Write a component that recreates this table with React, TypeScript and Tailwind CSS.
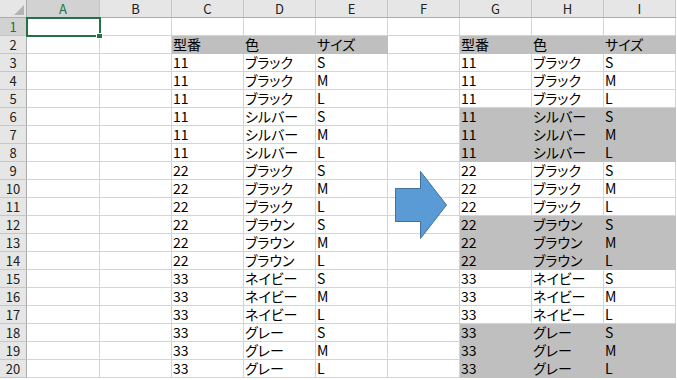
import React from 'react';

const COLS = ['A', 'B', 'C', 'D', 'E', 'F', 'G', 'H', 'I'];

// product rows: [型番, 色, サイズ]
const items: [string, string, string][] = [];
const groups: [string, string][] = [
  ['11', 'ブラック'],
  ['11', 'シルバー'],
  ['22', 'ブラック'],
  ['22', 'ブラウン'],
  ['33', 'ネイビー'],
  ['33', 'グレー'],
];
groups.forEach(([no, color]) => {
  ['S', 'M', 'L'].forEach((s) => items.push([no, color, s]));
});

const GRAY = 'bg-[#bfbfbf] border-[#bfbfbf]';
const PLAIN = 'bg-white border-[#d4d4d4]';

function cellFor(row: number, col: number): { text: string; gray: boolean } {
  // row is the sheet row number (1-based), col is index into COLS
  if (row === 2) {
    const head = ['型番', '色', 'サイズ'];
    if (col >= 2 && col <= 4) return { text: head[col - 2], gray: true };
    if (col >= 6 && col <= 8) return { text: head[col - 6], gray: true };
  }
  if (row >= 3) {
    const item = items[row - 3];
    const groupIdx = Math.floor((row - 3) / 3);
    if (col >= 2 && col <= 4) return { text: item[col - 2], gray: false };
    if (col >= 6 && col <= 8) return { text: item[col - 6], gray: groupIdx % 2 === 1 };
  }
  return { text: '', gray: false };
}

function Arrow() {
  return (
    <svg className="absolute left-[393px] top-[169px]" width="56" height="72" viewBox="393 169 56 72">
      <polygon
        points="395.5,188.5 420.5,188.5 420.5,171.5 446.5,205 420.5,238.5 420.5,221.5 395.5,221.5"
        fill="#5b9bd5"
        stroke="#41719c"
        strokeWidth="1"
      />
    </svg>
  );
}

export default function App() {
  const rows = Array.from({ length: 20 }, (_, i) => i + 1);

  return (
    <div className="relative w-[677px] h-[380px] overflow-hidden bg-white text-black font-['Noto_Sans_CJK_JP','Noto_Sans',sans-serif] [font-feature-settings:'palt'] text-[14px] leading-[17px]">
      <div className="grid grid-cols-[27px_73px_repeat(8,72px)] auto-rows-[18px]">
        {/* corner */}
        <div className="relative bg-[#e6e6e6] border-r border-b border-[#ababab]">
          <svg className="absolute left-[14px] top-[5px]" width="11" height="11" viewBox="0 0 11 11">
            <polygon points="10,0 10,10 0,10" fill="#b4b4b4" />
          </svg>
        </div>
        {/* column headers */}
        {COLS.map((c, i) => (
          <div
            key={c}
            className={
              i === 0
                ? 'flex items-center justify-center bg-[#d2d2d2] text-[#217346] border-r border-b border-r-[#c6c6c6] border-b-[#217346] text-[13px] leading-[16px]'
                : 'flex items-center justify-center bg-[#e6e6e6] text-[#222] border-r border-b border-r-[#c6c6c6] border-b-[#ababab] text-[13px] leading-[16px]'
            }
          >
            {c}
          </div>
        ))}

        {rows.map((r) => (
          <React.Fragment key={r}>
            <div
              className={
                r === 1
                  ? 'flex items-center justify-center bg-[#d2d2d2] text-[#217346] border-b border-r border-b-[#c6c6c6] border-r-[#217346] text-[13px] leading-[16px]'
                  : 'flex items-center justify-center bg-[#e6e6e6] text-[#222] border-b border-r border-b-[#c6c6c6] border-r-[#ababab] text-[13px] leading-[16px]'
              }
            >
              {r}
            </div>
            {COLS.map((c, ci) => {
              const { text, gray } = cellFor(r, ci);
              return (
                <div
                  key={c + r}
                  className={`border-r border-b pl-[1px] whitespace-nowrap overflow-hidden ${gray ? GRAY : PLAIN}`}
                >
                  {text}
                </div>
              );
            })}
          </React.Fragment>
        ))}
      </div>

      {/* active cell A1 */}
      <div className="absolute left-[26px] top-[17px] w-[75px] h-[20px] border-2 border-[#217346]" />
      <div className="absolute left-[96px] top-[33px] w-[7px] h-[6px] bg-[#217346] border border-white" />

      <Arrow />
    </div>
  );
}
